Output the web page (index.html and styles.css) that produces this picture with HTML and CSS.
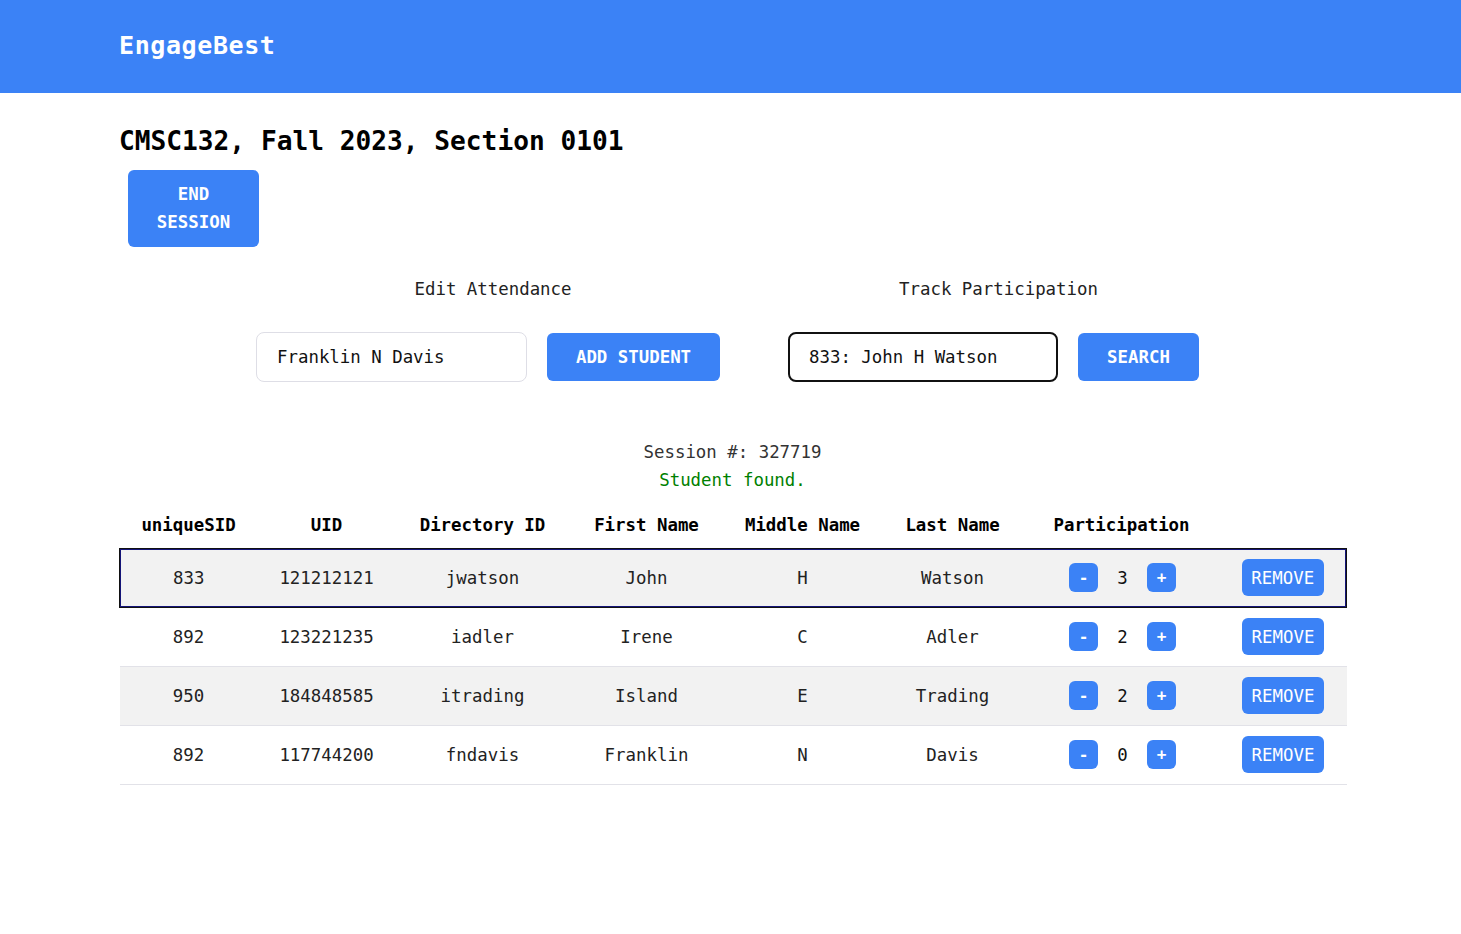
FILE: index.html
```html
<!DOCTYPE html>
<html lang="en">
<head>
<meta charset="utf-8">
<title>EngageBest</title>
<link rel="stylesheet" href="styles.css">
</head>
<body>
<header class="topbar">
  <div class="brand">EngageBest</div>
</header>
<main class="page">
  <h1 class="course-title">CMSC132, Fall 2023, Section 0101</h1>
  <button class="btn btn-end">END SESSION</button>

  <section class="controls">
    <div class="control-group group-attendance">
      <div class="control-label">Edit Attendance</div>
      <div class="control-row">
        <input class="text-input" type="text" value="Franklin N Davis">
        <button class="btn btn-add">ADD STUDENT</button>
      </div>
    </div>
    <div class="control-group group-track">
      <div class="control-label">Track Participation</div>
      <div class="control-row">
        <input class="text-input text-input-focus" type="text" value="833: John H Watson">
        <button class="btn btn-search">SEARCH</button>
      </div>
    </div>
  </section>

  <section class="status">
    <div class="session-no">Session #: 327719</div>
    <div class="found">Student found.</div>
  </section>

  <table class="roster">
    <colgroup>
      <col class="c1"><col class="c2"><col class="c3"><col class="c4">
      <col class="c5"><col class="c6"><col class="c7"><col class="c8">
    </colgroup>
    <thead>
      <tr>
        <th>uniqueSID</th><th>UID</th><th>Directory ID</th><th>First Name</th>
        <th>Middle Name</th><th>Last Name</th><th>Participation</th><th></th>
      </tr>
    </thead>
    <tbody>
      <tr class="row-alt row-selected">
        <td>833</td><td>121212121</td><td>jwatson</td><td>John</td><td>H</td><td>Watson</td>
        <td><div class="part"><button class="step">-</button><span class="count">3</span><button class="step">+</button></div></td>
        <td><button class="btn-remove">REMOVE</button></td>
      </tr>
      <tr>
        <td>892</td><td>123221235</td><td>iadler</td><td>Irene</td><td>C</td><td>Adler</td>
        <td><div class="part"><button class="step">-</button><span class="count">2</span><button class="step">+</button></div></td>
        <td><button class="btn-remove">REMOVE</button></td>
      </tr>
      <tr class="row-alt">
        <td>950</td><td>184848585</td><td>itrading</td><td>Island</td><td>E</td><td>Trading</td>
        <td><div class="part"><button class="step">-</button><span class="count">2</span><button class="step">+</button></div></td>
        <td><button class="btn-remove">REMOVE</button></td>
      </tr>
      <tr>
        <td>892</td><td>117744200</td><td>fndavis</td><td>Franklin</td><td>N</td><td>Davis</td>
        <td><div class="part"><button class="step">-</button><span class="count">0</span><button class="step">+</button></div></td>
        <td><button class="btn-remove">REMOVE</button></td>
      </tr>
    </tbody>
  </table>
</main>
</body>
</html>
```

FILE: styles.css
```css
* { box-sizing: border-box; }

body {
  margin: 0;
  background: #ffffff;
  color: #222222;
  font-family: "DejaVu Sans Mono", "Liberation Mono", monospace;
  font-size: 17.4px;
}

.topbar {
  height: 93px;
  background: #3b82f6;
  display: flex;
  align-items: center;
  padding-left: 119px;
}

.brand {
  color: #ffffff;
  font-weight: bold;
  font-size: 25px;
  letter-spacing: 0.6px;
  padding-bottom: 2px;
}

.page {
  padding: 0 115px 0 119px;
}

.course-title {
  margin: 30px 0 0 0;
  font-size: 26.2px;
  line-height: 36px;
  font-weight: bold;
  color: #000000;
}

.btn {
  border: none;
  background: #3b82f6;
  color: #ffffff;
  border-radius: 6px;
  font-family: "DejaVu Sans Mono", "Liberation Mono", monospace;
  font-weight: bold;
  font-size: 17.4px;
  cursor: pointer;
}

.btn-end {
  display: block;
  margin: 11px 0 0 9px;
  width: 131px;
  height: 77px;
  padding: 0 20px 2px;
  line-height: 28px;
  text-align: center;
}

.controls {
  display: flex;
  gap: 68px;
  padding-left: 137px;
  margin-top: 30px;
}

.control-group {
  display: flex;
  flex-direction: column;
  align-items: center;
}

.control-label {
  line-height: 24px;
  color: #222222;
  padding-left: 10px;
}

.control-row {
  display: flex;
  align-items: center;
  gap: 20px;
  margin-top: 31px;
}

.text-input {
  width: 271px;
  height: 50px;
  border: 1px solid #dedee6;
  border-radius: 8px;
  padding: 0 0 0 20px;
  font-family: "DejaVu Sans Mono", "Liberation Mono", monospace;
  font-size: 17.4px;
  color: #111111;
  background: #ffffff;
  outline: none;
}

.text-input-focus {
  width: 270px;
  border: 2px solid #111111;
  padding-left: 19px;
}

.btn-add {
  width: 173px;
  height: 48px;
}

.btn-search {
  width: 121px;
  height: 48px;
}

.status {
  margin-top: 56px;
  text-align: center;
  line-height: 28px;
}

.session-no { color: #333333; }
.found { color: #008000; }

.roster {
  margin-top: 9px;
  width: 1227px;
  table-layout: fixed;
  border-collapse: collapse;
}

.c1 { width: 138px; }
.c2 { width: 138px; }
.c3 { width: 174px; }
.c4 { width: 154px; }
.c5 { width: 158px; }
.c6 { width: 142px; }
.c7 { width: 196px; }
.c8 { width: 127px; }

.roster th {
  height: 45px;
  font-weight: bold;
  color: #000000;
  text-align: center;
  padding: 0;
}

.roster td {
  height: 59px;
  text-align: center;
  padding: 0;
  color: #222222;
  border-bottom: 1px solid #e2e2e8;
}

.row-alt td { background: #f2f2f2; }

.row-selected td {
  border-top: 1px solid #111111;
  border-bottom: 1px solid #111111;
  box-shadow: inset 0 1px 0 #141478, inset 0 -1px 0 #141478;
  height: 59px;
}

.row-selected td:first-child {
  border-left: 1px solid #111111;
  box-shadow: inset 0 1px 0 #141478, inset 0 -1px 0 #141478, inset 1px 0 0 #141478;
}

.row-selected td:last-child {
  border-right: 1px solid #111111;
  box-shadow: inset 0 1px 0 #141478, inset 0 -1px 0 #141478, inset -1px 0 0 #141478;
}

.part {
  display: flex;
  justify-content: center;
  align-items: center;
  gap: 19px;
  padding-left: 2px;
}

.step {
  width: 29px;
  height: 29px;
  border: none;
  border-radius: 6px;
  background: #3b82f6;
  color: #ffffff;
  font-family: "DejaVu Sans Mono", "Liberation Mono", monospace;
  font-weight: bold;
  font-size: 16px;
  padding: 0;
}

.count {
  width: 11px;
  text-align: center;
  color: #111111;
}

.btn-remove {
  width: 82px;
  height: 37px;
  border: none;
  border-radius: 6px;
  background: #3b82f6;
  color: #ffffff;
  font-family: "DejaVu Sans Mono", "Liberation Mono", monospace;
  font-size: 17.4px;
  padding: 0;
}
```
